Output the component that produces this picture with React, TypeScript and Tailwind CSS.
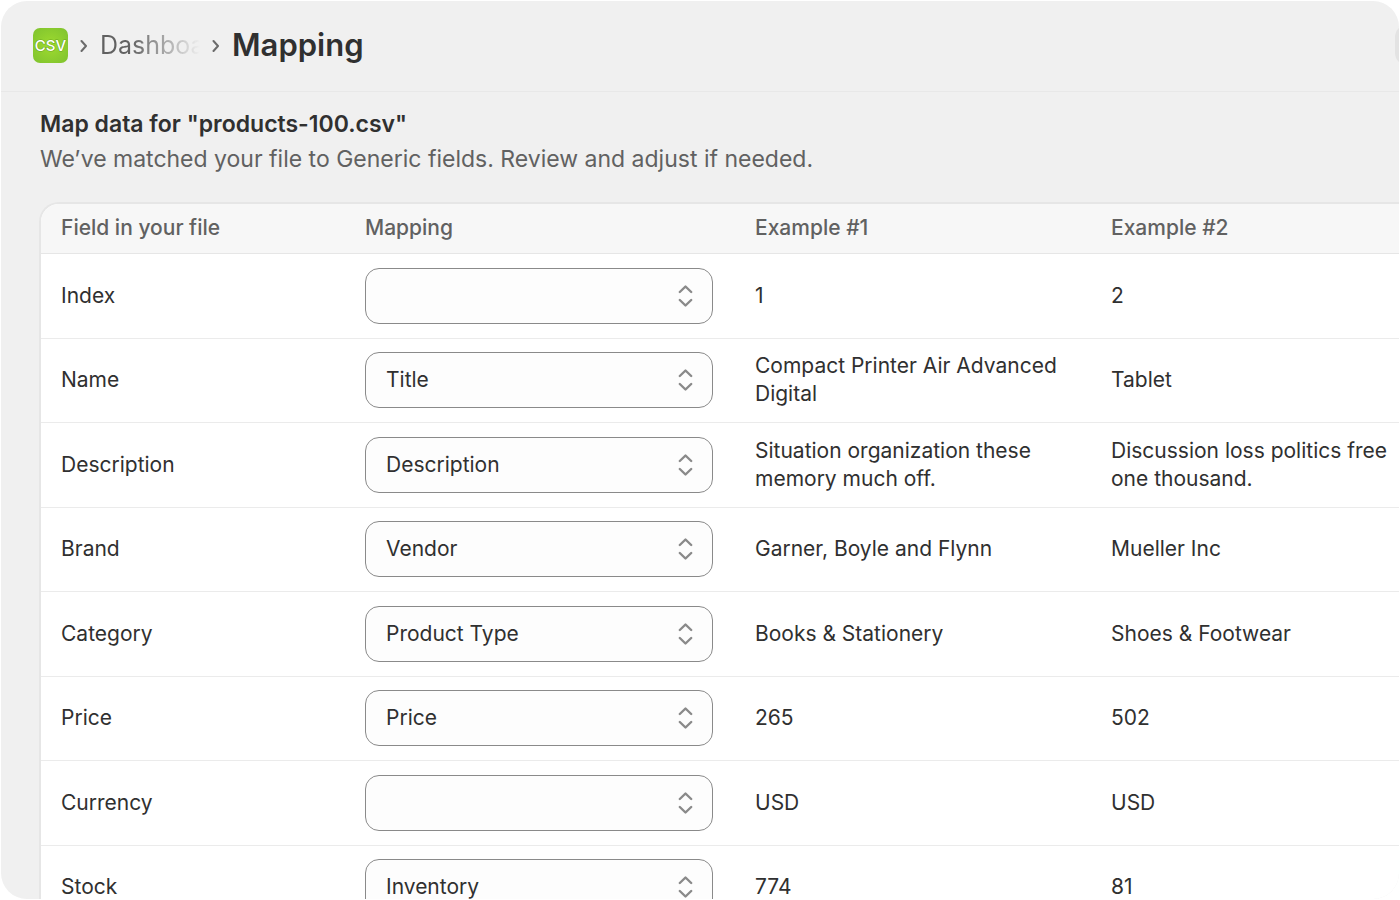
import React, { useState } from 'react';

const FIELDS = ['', 'Title', 'Description', 'Vendor', 'Product Type', 'Price', 'Inventory'];

const ROWS = [
  { field: 'Index', mapping: '', examples: ['1', '2'] },
  { field: 'Name', mapping: 'Title', examples: ['Compact Printer Air Advanced Digital', 'Tablet'] },
  {
    field: 'Description',
    mapping: 'Description',
    examples: ['Situation organization these memory much off.', 'Discussion loss politics free one thousand.'],
  },
  { field: 'Brand', mapping: 'Vendor', examples: ['Garner, Boyle and Flynn', 'Mueller Inc'] },
  { field: 'Category', mapping: 'Product Type', examples: ['Books & Stationery', 'Shoes & Footwear'] },
  { field: 'Price', mapping: 'Price', examples: ['265', '502'] },
  { field: 'Currency', mapping: '', examples: ['USD', 'USD'] },
  { field: 'Stock', mapping: 'Inventory', examples: ['774', '81'] },
];

const Chevron = () => (
  <svg width="8" height="14" viewBox="0 0 8 14" fill="none" stroke="#6b6b6b" strokeWidth="2" strokeLinecap="round" strokeLinejoin="round" aria-hidden="true">
    <path d="M1.500 3 6 8 1.500 13" />
  </svg>
);

const CsvLogo = () => (
  <svg width="35" height="35" viewBox="0 0 35 35" role="img" aria-label="CSV">
    <defs>
      <radialGradient id="csv-bg" r="0.7">
        <stop offset="0" stopColor="#9edb2e" />
        <stop offset="1" stopColor="#7fc22f" />
      </radialGradient>
    </defs>
    <rect width="35" height="35" rx="7" fill="url(#csv-bg)" />
    <text x="17.500" y="22.500" textAnchor="middle" fontFamily="Inter, sans-serif" fontWeight="500" fontSize="15" fill="#fff" stroke="#6aa51f" strokeWidth="1" paintOrder="stroke">
      CSV
    </text>
  </svg>
);

const MappingSelect = ({ field, value, onChange }) => (
  <div className="relative">
    <select
      aria-label={`Mapping for ${field}`}
      value={value}
      onChange={(e) => onChange(e.target.value)}
      className="block h-14 w-full appearance-none rounded-[14px] border border-[#8a8a8a] bg-[#fdfdfd] pl-5 pr-12 text-[21px] text-[#303030]"
    >
      {FIELDS.map((name) => (
        <option key={name} value={name}>{name}</option>
      ))}
    </select>
    <svg className="pointer-events-none absolute right-5 top-4" width="16" height="24" viewBox="0 0 16 24" fill="none" stroke="#8a8a8a" strokeWidth="2.400" strokeLinecap="round" strokeLinejoin="round" aria-hidden="true">
      <path d="M2.800 8 8.500 2.500 14.200 8M2.800 16 8.500 21.500 14.200 16" />
    </svg>
  </div>
);

const App = () => {
  const [mappings, setMappings] = useState(ROWS.map((row) => row.mapping));

  const handleMappingChange = (index, value) => {
    setMappings(mappings.map((m, i) => (i === index ? value : m)));
  };

  return (
    <div className="h-screen overflow-hidden bg-white p-px font-['Inter',sans-serif] text-[#303030]">
      <div className="h-full overflow-hidden rounded-[26px] bg-[#f0f0f0]">
        <header className="flex h-[91px] items-center justify-between border-b border-[#e8e8e8] pb-0.5 pl-8">
          <nav aria-label="Breadcrumb" className="flex items-center">
            <CsvLogo />
            <span className="ml-3 mr-3"><Chevron /></span>
            <a href="#dashboard" className="w-[100px] overflow-hidden whitespace-nowrap bg-linear-to-r from-[#616161] from-30% to-transparent bg-clip-text text-[25px] leading-8 text-transparent">
              Dashboard
            </a>
            <span className="ml-3 mr-3"><Chevron /></span>
            <h1 className="text-[31px] font-semibold leading-10">Mapping</h1>
          </nav>
          <button aria-label="More actions" className="-mr-9 h-10 w-10 shrink-0 rounded-xl bg-[#e3e3e3]"></button>
        </header>

        <main className="pl-[38px] pt-4">
          <h2 className="pl-px text-[23px] font-semibold leading-8">Map data for "products-100.csv"</h2>
          <p className="pl-px pt-[3px] text-[23px] leading-8 text-[#616161]">
            We’ve matched your file to Generic fields. Review and adjust if needed.
          </p>

          <div className="mt-[27px] overflow-hidden rounded-tl-[20px] border-l-2 border-t-2 border-[#e6e6e6] bg-white">
            <table className="w-full table-fixed text-left text-[21px] leading-7">
              <colgroup>
                <col className="w-[304px]" />
                <col className="w-[390px]" />
                <col className="w-[356px]" />
                <col />
              </colgroup>
              <thead className="bg-[#f7f7f7] text-[#616161]">
                <tr className="h-[49px] border-b border-[#e6e6e6]">
                  <th className="pl-5 font-medium">Field in your file</th>
                  <th className="pl-5 font-medium">Mapping</th>
                  <th className="pl-5 font-medium">Example #1</th>
                  <th className="pl-5 font-medium">Example #2</th>
                </tr>
              </thead>
              <tbody>
                {ROWS.map((row, i) => (
                  <tr key={row.field} className="border-b border-[#ebebeb] odd:h-[85px] even:h-[84px]">
                    <td className="pl-5">{row.field}</td>
                    <td className="pl-5 pr-[22px]">
                      <MappingSelect field={row.field} value={mappings[i]} onChange={(value) => handleMappingChange(i, value)} />
                    </td>
                    <td className="px-5">{row.examples[0]}</td>
                    <td className="pl-5 pr-2">{row.examples[1]}</td>
                  </tr>
                ))}
              </tbody>
            </table>
          </div>
        </main>
      </div>
    </div>
  );
};

export default App;
